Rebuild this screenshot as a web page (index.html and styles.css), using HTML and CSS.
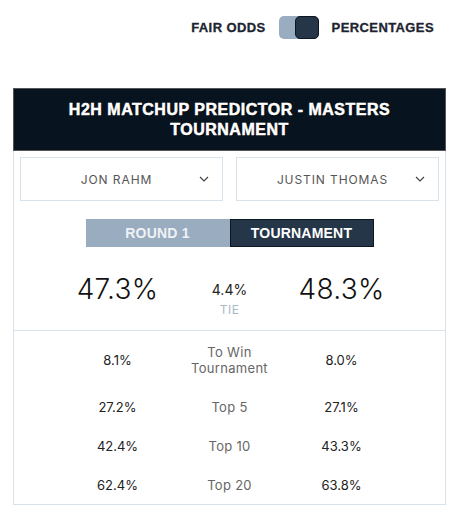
FILE: index.html
```html
<!DOCTYPE html>
<html>
<head>
<meta charset="utf-8">
<link rel="stylesheet" href="styles.css">
</head>
<body>
<div class="page">
  <div class="toggle-bar">
    <span class="toggle-label">FAIR ODDS</span>
    <span class="switch"><span class="knob"></span></span>
    <span class="toggle-label">PERCENTAGES</span>
  </div>
  <div class="card">
    <div class="card-header">H2H MATCHUP PREDICTOR - MASTERS TOURNAMENT</div>
    <div class="selects">
      <div class="select"><span>JON RAHM</span><svg class="chev" width="10" height="6" viewBox="0 0 10 6"><path d="M1 1l4 4 4-4" fill="none" stroke="#444" stroke-width="1.2"/></svg></div>
      <div class="select"><span>JUSTIN THOMAS</span><svg class="chev" width="10" height="6" viewBox="0 0 10 6"><path d="M1 1l4 4 4-4" fill="none" stroke="#444" stroke-width="1.2"/></svg></div>
    </div>
    <div class="tabs">
      <div class="tab tab-off">ROUND 1</div>
      <div class="tab tab-on">TOURNAMENT</div>
    </div>
    <div class="summary">
      <div class="big">47.3%</div>
      <div class="tie"><div class="tie-val">4.4%</div><div class="tie-label">TIE</div></div>
      <div class="big">48.3%</div>
    </div>
    <div class="rows">
      <div class="row"><div class="val">8.1%</div><div class="lbl">To Win<br>Tournament</div><div class="val">8.0%</div></div>
      <div class="row"><div class="val">27.2%</div><div class="lbl">Top 5</div><div class="val">27.1%</div></div>
      <div class="row"><div class="val">42.4%</div><div class="lbl">Top 10</div><div class="val">43.3%</div></div>
      <div class="row"><div class="val">62.4%</div><div class="lbl">Top 20</div><div class="val">63.8%</div></div>
    </div>
  </div>
</div>
</body>
</html>
```
FILE: styles.css
```css
* { box-sizing: border-box; }
html, body { margin: 0; padding: 0; background: #fff; }
body { font-family: "Inter", "Open Sans", sans-serif; color: #222; }
.page { width: 460px; padding: 16px 13px 0 13px; }
.toggle-bar { display: flex; justify-content: flex-end; align-items: center; height: 23px; padding-right: 13px; }
.toggle-label { font-family: "Liberation Sans", Arial, sans-serif; font-weight: 700; font-size: 13px; letter-spacing: 0.4px; color: #1c2430; -webkit-text-stroke: 0.3px #1c2430; }
.switch { width: 40px; height: 23px; border-radius: 5px; background: #9aacbf; margin: 0 13px; display: flex; justify-content: flex-end; }
.knob { width: 24px; height: 23px; border-radius: 5px; background: #253649; border: 1px solid #0c1520; }
.card { margin-top: 49px; width: 433px; border: 1px solid #d8e2ea; border-top: none; }
.card-header { margin: 0 -1px; background: #07141f; border: 1px solid #555; color: #fff; text-align: center; font-family: "Liberation Sans", Arial, sans-serif; font-weight: 700; font-size: 16px; line-height: 20px; padding: 11px 40px 10px; letter-spacing: 0.5px; -webkit-text-stroke: 0.5px #fff; text-shadow: 1px 1px 0 #000; }
.selects { display: flex; gap: 13px; padding: 6px 6px 0 6px; }
.select { flex: 1; height: 44px; border: 1px solid #d8e2ea; display: flex; align-items: center; justify-content: center; padding-right: 10px; position: relative; font-size: 12px; letter-spacing: 0.9px; color: #555; }
.chev { position: absolute; right: 13px; top: 18px; }
.tabs { display: flex; justify-content: center; margin-top: 18px; }
.tab { width: 144px; height: 28px; display: flex; align-items: center; justify-content: center; font-family: "Liberation Sans", Arial, sans-serif; font-weight: 700; font-size: 14px; letter-spacing: 0.2px; color: #fff; }
.tab-off { background: #9aacbf; color: #eef2f6; }
.tab-on { background: #253649; border: 1px solid #0c1520; }
.summary { display: grid; grid-template-columns: 112px 112px 112px; justify-content: center; align-items: start; padding: 25px 0 12px; border-bottom: 1px solid #d8e2ea; }
.big { font-size: 28px; font-weight: 300; text-align: center; line-height: 34px; color: #111; letter-spacing: 0.3px; }
.tie { text-align: center; padding-top: 10px; }
.tie-val { font-size: 14px; line-height: 16px; color: #222; }
.tie-label { font-size: 12px; line-height: 16px; color: #a8b8c8; letter-spacing: 0.5px; margin-top: 4px; }
.rows { padding: 12px 0 0; }
.row { display: grid; grid-template-columns: 112px 112px 112px; justify-content: center; align-items: center; min-height: 39px; }
.row:first-child { min-height: 34px; margin-bottom: 10px; }
.val { font-size: 13px; text-align: center; color: #222; }
.lbl { font-size: 13px; text-align: center; color: #666; line-height: 16px; letter-spacing: 0.3px; }
```
